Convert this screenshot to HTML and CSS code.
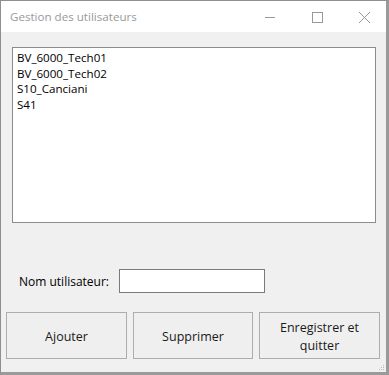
FILE: index.html
```html
<!DOCTYPE html>
<html lang="fr">
<head>
  <meta charset="UTF-8" />
  <title>Gestion des utilisateurs</title>
  <link rel="stylesheet" href="styles.css">
</head>
<body>

  <div class="window">
    <div class="titlebar">
      <span class="title">Gestion des utilisateurs</span>
      <div class="controls">
        <span class="ctl">
          <svg width="12" height="12" viewBox="0 0 12 12"><path d="M1 6.5h10" stroke="#999" stroke-width="1" fill="none"/></svg>
        </span>
        <span class="ctl">
          <svg width="12" height="12" viewBox="0 0 12 12"><rect x="1.5" y="1.5" width="10" height="10" stroke="#999" stroke-width="1" fill="none"/></svg>
        </span>
        <span class="ctl">
          <svg width="12" height="12" viewBox="0 0 12 12"><path d="M1 1l11 11M12 1L1 12" stroke="#999" stroke-width="1" fill="none"/></svg>
        </span>
      </div>
    </div>

    <div class="content">
      <ul class="listbox">
        <li>BV_6000_Tech01</li>
        <li>BV_6000_Tech02</li>
        <li>S10_Canciani</li>
        <li>S41</li>
      </ul>

      <div class="field-row">
        <label for="userName">Nom utilisateur:</label>
        <input type="text" id="userName" />
      </div>

      <div class="buttons">
        <button>Ajouter</button>
        <button>Supprimer</button>
        <button>Enregistrer et<br>quitter</button>
      </div>

      <!-- size grip -->
      <svg class="grip" width="6" height="6" viewBox="0 0 6 6">
        <rect x="4" y="0" width="1" height="1" fill="#bbb"/>
        <rect x="2" y="2" width="1" height="1" fill="#bbb"/>
        <rect x="4" y="2" width="1" height="1" fill="#bbb"/>
        <rect x="0" y="4" width="1" height="1" fill="#bbb"/>
        <rect x="2" y="4" width="1" height="1" fill="#bbb"/>
        <rect x="4" y="4" width="1" height="1" fill="#bbb"/>
      </svg>
    </div>
  </div>

</body>
</html>
```

FILE: styles.css
```css
body {
  margin: 0;
  background-color: #f0f0f0;
  font-family: 'Open Sans', 'Noto Sans', sans-serif;
  font-size: 12px;
  color: #000;
}

.window {
  width: 389px;
  height: 375px;
  box-sizing: border-box;
  border: 1px solid #8f8f8f;
  border-right: 3px solid #9a9a9a;
  border-bottom: 3px solid #9a9a9a;
  background-color: #f0f0f0;
  display: flex;
  flex-direction: column;
}

.titlebar {
  height: 31px;
  background-color: #fff;
  display: flex;
  align-items: center;
  justify-content: space-between;
  flex-shrink: 0;
}

.title {
  margin-left: 9px;
  color: #999;
  font-size: 11.6px;
}

.controls {
  display: flex;
  margin-right: 16px;
}

.ctl {
  width: 12px;
  height: 12px;
  margin-left: 35px;
  display: flex;
}

.content {
  flex: 1;
  position: relative;
  display: flex;
  flex-direction: column;
}

.listbox {
  list-style: none;
  margin: 15px 0 0 11px;
  padding: 2px 4px;
  width: 364px;
  height: 176px;
  box-sizing: border-box;
  background-color: #fff;
  border: 1px solid #8c8c8c;
  font-size: 11.6px;
  line-height: 15.6px;
}

.field-row {
  display: flex;
  align-items: center;
  margin: 46px 0 0 18px;
}

.field-row label {
  width: 100px;
}

.field-row input {
  width: 146px;
  height: 24px;
  box-sizing: border-box;
  margin: 0;
  border: 1px solid #7a7a7a;
  background-color: #fff;
  font: inherit;
}

.buttons {
  display: flex;
  gap: 6px;
  margin: 19px 0 0 5px;
}

.buttons button {
  width: 121px;
  height: 47px;
  box-sizing: border-box;
  margin: 0;
  border: 1px solid #adadad;
  background-color: #efefef;
  color: #1a1a1a;
  font-family: inherit;
  font-size: 12.5px;
  line-height: 18px;
  padding: 2px 0 0;
}

.buttons button:nth-child(2) {
  width: 120px;
}

.grip {
  position: absolute;
  right: 1px;
  bottom: 1px;
}
```
